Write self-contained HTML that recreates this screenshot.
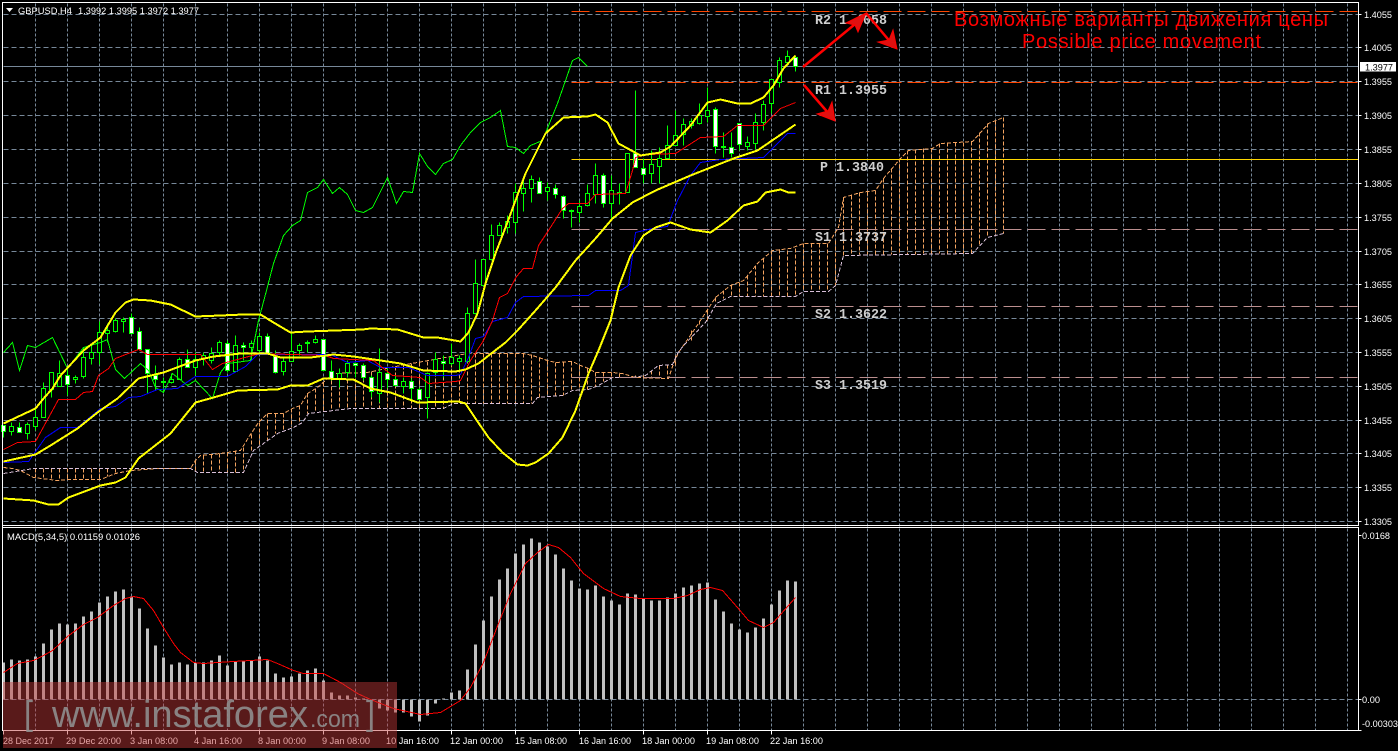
<!DOCTYPE html>
<html lang="en">
<head>
<meta charset="utf-8">
<title>GBPUSD,H4</title>
<style>
html,body{margin:0;padding:0;background:#000;width:1398px;height:751px;overflow:hidden}
svg{display:block}
.lab{font:9.5px "Liberation Sans",sans-serif;fill:#fff}
.piv{font:bold 14px "Liberation Mono",monospace;fill:#cfcfcf}
.ru{font:20px "Liberation Sans",sans-serif;fill:#f00}
</style>
</head>
<body>
<svg xmlns="http://www.w3.org/2000/svg" width="1398" height="751" viewBox="0 0 1398 751">
<rect width="1398" height="751" fill="#000"/>
<g transform="translate(.5 .5)" fill="none" shape-rendering="crispEdges">
<!-- grid -->
<path stroke="#778899" stroke-dasharray="3 2" d="M35 3V730M67 3V730M99 3V730M131 3V730M163 3V730M195 3V730M227 3V730M259 3V730M291 3V730M323 3V730M355 3V730M387 3V730M419 3V730M451 3V730M483 3V730M515 3V730M547 3V730M579 3V730M611 3V730M643 3V730M675 3V730M707 3V730M739 3V730M771 3V730M803 3V730M835 3V730M867 3V730M899 3V730M931 3V730M963 3V730M995 3V730M1027 3V730M1059 3V730M1091 3V730M1123 3V730M1155 3V730M1187 3V730M1219 3V730M1251 3V730M1283 3V730M1315 3V730M1347 3V730"/>
<path stroke="#778899" stroke-dasharray="5 3" d="M3 14H1358M3 47H1358M3 81H1358M3 115H1358M3 149H1358M3 183H1358M3 217H1358M3 251H1358M3 284H1358M3 318H1358M3 352H1358M3 386H1358M3 420H1358M3 453H1358M3 487H1358M3 521H1358M3 699H1358"/>
<!-- cloud -->
<path stroke="#f4a460" stroke-dasharray="4 2" d="M35 468V477M43 468V477M51 468V478M59 468V480M67 468V479M75 468V479M83 468V479M91 468V479M99 468V479M107 468V476M115 468V473M195 460V472M203 455V472M211 454V472M219 453V472M227 452V472M235 450V472M243 447V472M251 434V452M259 422V445M267 413V440M275 413V433M283 413V430M291 408V427M299 405V422M307 393V413M315 388V412M323 382V411M331 374V410M339 373V409M347 373V408M355 372V408M363 372V408M371 371V408M379 369V408M387 367V408M395 366V408M403 365V408M411 363V408M419 362V408M427 361V408M435 360V408M443 358V408M451 357V404M459 356V403M467 353V403M475 353V403M483 353V403M491 353V403M499 353V403M507 353V403M515 353V403M523 353V403M531 354V403M539 357V397M547 360V396M555 362V395M563 362V395M571 361V390M579 365V390M587 368V389M595 372V386M603 372V381M611 372V377M619 373V377M635 375V377M643 375V378M651 370V378M659 365V378M667 364V378M675 355V365M691 330V340M699 320V325M707 310V320M715 297V303M723 290V298M731 285V296M739 282V296M747 275V296M755 265V296M763 258V296M771 250V296M779 249V296M787 250V296M795 248V296M803 243V291M811 243V291M819 243V291M827 243V291M835 240V285M843 197V255M851 195V255M859 192V254M867 191V254M875 190V254M883 178V254M891 168V254M899 158V254M907 150V254M915 149V254M923 148V253M931 148V253M939 143V253M947 142V253M955 142V253M963 142V253M971 141V253M979 132V245M987 123V237M995 120V235M1003 117V233"/>
<polyline stroke="#f4a460" stroke-dasharray="4 2" points="3,467 12,468 20,470 33,477 57,480 67,479 100,479 115,473 130,470 157,468 190,468 195,460 200,455 220,453 240,450 248,437 258,422 267,413 283,413 292,408 300,405 307,393 317,387 333,373 367,372 400,365 467,353"/>
<polyline stroke="#f4a460" stroke-dasharray="4 2" points="467,353 523,353 532,355 547,360 555,362 572,361 580,365 588,368 595,372 612,372 622,373 635,377 668,378 673,363 678,352 683,345 700,320 715,297 730,285 743,280 757,263 772,250 790,248 803,243 828,243 838,227 843,197 860,192 875,190 883,178 900,158 908,150 932,148 940,143 972,141 988,123 1003,117"/>
<polyline stroke="#d8bfd8" stroke-dasharray="4 2" points="3,473 33,468 190,468 197,472 243,472 253,450 263,443 277,433 293,427 302,422 308,413 333,410 350,408 443,408 453,403 467,403 532,403 537,397 562,395 572,390 588,389 598,385 612,377 632,377 645,375 658,365 672,364 677,353 683,345 705,322 716,303 730,296 795,296 803,291 828,291 835,285 843,255 908,254 972,253 987,237 1003,233"/>
<!-- price + pivots -->
<path stroke="#778899" d="M3 66H1358"/>
<path stroke="#ff4500" stroke-dasharray="18 6" d="M571 11H1358M571 82H1358"/>
<path stroke="#ffd700" d="M571 159H1358"/>
<path stroke="#bc8f8f" stroke-dasharray="18 6" d="M571 229H1358M571 306H1358M571 377H1358"/>
<!-- wicks -->
<path stroke="#0f0" d="M3 425V437M11 422V435M19 422V432M27 422V439M35 408V430M43 382V417M51 372V397M59 360V386M67 368V395M75 375V383M83 347V378M91 345V364M99 321V364M107 323V342M115 318V332M123 317V332M131 313V334M139 327V349M147 349V393M155 365V390M163 377V392M171 373V383M179 357V379M187 349V367M195 352V375M203 352V365M211 347V363M219 340V355M227 340V372M235 335V372M243 342V360M251 340V360M259 332V352M267 333V353M275 350V373M283 358V375M291 332V361M299 343V355M307 340V352M315 335V343M323 339V371M331 360V380M339 368V387M347 360V377M355 362V377M363 363V380M371 375V397M379 348V402M387 367V388M395 375V386M403 377V393M411 378V400M419 387V400M427 372V418M435 352V375M443 355V377M451 343V365M459 355V370M467 307V362M475 259V314M483 259V285M491 224V260M499 222V235M507 215V233M515 183V233M523 178V211M531 175V202M539 177V193M547 182V200M555 184V198M563 195V218M571 209V227M579 200V222M587 184V206M595 163V203M603 173V207M611 175V218M619 183V204M627 153V192M635 90V167M643 158V183M651 150V183M659 147V183M667 125V158M675 110V145M683 118V145M691 118V128M699 103V124M707 87V122M715 107V153M723 132V157M731 132V157M739 123V150M747 136V150M755 113V149M763 100V130M771 79V113M779 57V87M787 50V63M795 55V71"/>
<!-- bull bodies -->
<path stroke="#0f0" fill="#000" d="M9 426h4v5h-4zM25 424h4v9h-4zM33 417h4v9h-4zM41 388h4v29h-4zM49 372h4v17h-4zM57 373h4v13h-4zM73 377h4v2h-4zM81 357h4v19h-4zM89 352h4v6h-4zM97 332h4v20h-4zM105 330h4v3h-4zM113 320h4v11h-4zM121 319h4v2h-4zM169 379h4v3h-4zM177 359h4v20h-4zM193 359h4v8h-4zM201 355h4v3h-4zM209 353h4v7h-4zM217 342h4v10h-4zM233 345h4v26h-4zM249 343h4v4h-4zM257 336h4v14h-4zM281 361h4v10h-4zM289 351h4v10h-4zM297 345h4v5h-4zM313 339h4v3h-4zM337 373h4v6h-4zM345 363h4v9h-4zM377 372h4v21h-4zM401 381h4v5h-4zM425 373h4v24h-4zM433 359h4v13h-4zM449 357h4v6h-4zM457 358h4v3h-4zM465 313h4v48h-4zM473 283h4v30h-4zM481 259h4v26h-4zM489 235h4v24h-4zM497 225h4v10h-4zM505 221h4v6h-4zM513 192h4v30h-4zM521 188h4v5h-4zM529 179h4v9h-4zM545 187h4v4h-4zM569 210h4v1h-4zM577 206h4v6h-4zM585 193h4v12h-4zM593 175h4v19h-4zM609 190h4v13h-4zM617 192h4v1h-4zM625 153h4v39h-4zM649 164h4v9h-4zM657 158h4v8h-4zM665 145h4v13h-4zM673 135h4v10h-4zM681 124h4v10h-4zM689 121h4v4h-4zM697 115h4v8h-4zM705 110h4v6h-4zM721 146h4v1h-4zM745 142h4v4h-4zM753 122h4v21h-4zM761 104h4v18h-4zM769 79h4v24h-4zM777 60h4v22h-4zM785 56h4v6h-4z"/>
<!-- bear bodies -->
<path stroke="#0f0" fill="#fff" d="M1 425h4v6h-4zM17 427h4v5h-4zM65 375h4v9h-4zM129 317h4v16h-4zM137 331h4v18h-4zM145 349h4v24h-4zM153 375h4v4h-4zM161 381h4v1h-4zM185 359h4v8h-4zM225 343h4v27h-4zM241 345h4v2h-4zM265 336h4v17h-4zM273 356h4v16h-4zM305 342h4v1h-4zM321 339h4v31h-4zM329 371h4v7h-4zM353 363h4v2h-4zM361 365h4v12h-4zM369 377h4v14h-4zM385 373h4v6h-4zM393 379h4v6h-4zM409 381h4v7h-4zM417 389h4v10h-4zM441 361h4v2h-4zM537 181h4v12h-4zM553 188h4v6h-4zM561 196h4v14h-4zM601 175h4v28h-4zM633 153h4v14h-4zM641 168h4v6h-4zM713 109h4v37h-4zM729 147h4v6h-4zM737 123h4v21h-4zM793 57h4v9h-4z"/>
<!-- green chikou -->
<polyline stroke="#0f0" points="3,352 12,342 19,370 27,345 35,347 52,337 67,368 83,347 100,342 107,339 115,369 124,378 140,363 148,370 155,387 163,392 172,373 187,385 195,380 212,398 220,372 227,363 250,360 258,320 266,290 273,263 283,235 292,225 300,220 307,192 317,187 323,179 332,193 339,187 347,194 355,210 363,212 372,207 387,177 396,203 403,191 412,192 419,153 427,166 435,174 443,163 452,159 460,145 470,132 480,122 490,117 500,110 507,146 515,147 523,153 530,145 542,140 557,103 572,60 578,57 587,66"/>
<!-- blue -->
<polyline stroke="#00f" points="3,462 28,461 45,437 60,427 77,427 100,408 115,406 128,397 140,396 157,389 177,388 195,376 227,376 245,366 257,354 330,354 347,362 367,360 380,367 408,367 427,375 455,375 460,374 468,357 475,338 483,336 492,321 507,317 515,302 523,296 588,295 595,290 620,290 628,285 635,232 652,228 667,226 677,200 690,175 700,162 720,159 763,157 787,133 795,133"/>
<!-- red -->
<polyline stroke="#f00" points="3,449 17,442 35,441 58,399 75,399 83,392 92,391 98,375 108,368 115,358 138,349 147,354 200,354 212,369 222,363 252,355 260,353 325,355 333,358 373,360 392,375 420,377 428,383 455,381 460,380 470,360 483,340 492,320 499,297 507,293 516,276 523,268 532,268 538,245 548,230 562,208 568,203 587,203 595,194 625,193 632,170 635,157 647,154 675,153 700,137 723,136 737,125 763,125 780,108 795,102"/>
<!-- bollinger -->
<g stroke="#ff0" stroke-width="2" stroke-linejoin="round">
<polyline points="3,423 35,408 43,398 52,388 60,375 83,350 100,337 115,312 125,302 133,299 150,300 170,304 195,316 220,315 243,314 260,314 273,322 290,332 307,331 362,329 370,328 397,329 423,337 437,337 460,341 468,332 477,313 485,283 495,253 505,227 515,200 525,173 545,133 563,117 587,116 595,114 607,122 618,143 640,155 660,152 670,146 690,125 707,102 720,99 737,103 750,103 763,97 773,85 783,68 795,55"/>
<polyline points="3,461 35,454 50,445 77,428 97,412 117,398 138,378 163,372 195,360 213,356 240,353 267,353 280,357 310,357 333,354 353,356 380,360 400,363 423,370 455,371 465,369 478,363 492,352 505,342 517,330 535,310 555,287 575,260 595,238 612,218 632,202 655,190 690,175 733,158 757,150 795,124"/>
<polyline points="3,498 33,500 48,504 58,504 68,497 100,485 115,482 125,477 138,458 170,433 195,402 213,397 237,390 277,389 290,385 307,385 323,378 353,379 370,388 390,392 417,402 458,401 465,403 475,418 488,437 502,452 517,464 527,465 535,462 548,453 562,437 575,410 588,373 598,350 610,320 618,287 630,255 643,235 655,227 670,222 690,229 710,232 727,220 743,205 757,201 765,192 780,189 788,192 795,192"/>
</g>
<!-- MACD bars -->
<path stroke="#c0c0c0" stroke-width="3" d="M3 699V662M11 699V659M19 699V660M27 699V659M35 699V656M43 699V643M51 699V629M59 699V623M67 699V624M75 699V623M83 699V616M91 699V611M99 699V602M107 699V596M115 699V591M123 699V589M131 699V596M139 699V608M147 699V628M155 699V645M163 699V657M171 699V664M179 699V662M187 699V664M195 699V662M203 699V662M211 699V660M219 699V655M227 699V665M235 699V661M243 699V660M251 699V660M259 699V656M267 699V660M275 699V673M283 699V677M291 699V676M299 699V673M307 699V670M315 699V668M323 699V680M331 699V692M339 699V695M347 699V695M355 699V697M363 699V698M371 699V700M379 699V708M387 699V710M395 699V712M403 699V712M411 699V716M419 699V721M427 699V715M435 699V703M443 699V698M451 699V692M459 699V690M467 699V669M475 699V644M483 699V620M491 699V596M499 699V579M507 699V568M515 699V553M523 699V544M531 699V538M539 699V542M547 699V546M555 699V554M563 699V568M571 699V580M579 699V588M587 699V589M595 699V585M603 699V596M611 699V600M619 699V604M627 699V593M635 699V594M643 699V598M651 699V600M659 699V600M667 699V597M675 699V593M683 699V587M691 699V585M699 699V583M707 699V582M715 699V599M723 699V611M731 699V623M739 699V629M747 699V632M755 699V627M763 699V618M771 699V604M779 699V590M787 699V580M795 699V581"/>
<!-- MACD signal -->
<polyline stroke="#f00" points="3,672 17,663 33,660 43,655 52,650 67,636 83,624 97,617 113,605 125,598 133,596 143,598 153,610 163,627 173,643 180,652 193,662 203,663 217,662 233,661 267,659 277,663 293,670 303,673 323,673 340,682 357,693 370,699 393,708 420,714 440,712 460,700 470,687 483,662 498,623 510,593 525,563 537,552 548,544 558,547 570,557 583,573 603,588 620,596 640,598 673,598 687,595 700,589 710,587 722,590 737,607 748,620 763,627 773,622 795,597"/>
<!-- frame -->
<path stroke="#fff" d="M2 2H1358V525H2zM2 527H1358V730H2zM2 2V730"/>
<!-- right ticks -->
<path stroke="#fff" d="M1358 14h3M1358 47h3M1358 81h3M1358 115h3M1358 149h3M1358 183h3M1358 217h3M1358 251h3M1358 284h3M1358 318h3M1358 352h3M1358 386h3M1358 420h3M1358 453h3M1358 487h3M1358 521h3M1358 535h3M1358 699h3M1358 730h3"/>
<!-- bottom ticks -->
<path stroke="#fff" d="M3 730v4M67 730v4M131 730v4M195 730v4M259 730v4M323 730v4M387 730v4M451 730v4M515 730v4M579 730v4M643 730v4M707 730v4M771 730v4"/>
</g>

<!-- header -->
<polygon points="6,8 13,8 9.5,12" fill="#fff"/>
<text class="lab" x="18" y="14" textLength="54" lengthAdjust="spacingAndGlyphs">GBPUSD,H4</text>
<text class="lab" x="78" y="14" textLength="121" lengthAdjust="spacingAndGlyphs">1.3992 1.3995 1.3972 1.3977</text>
<text class="lab" x="7" y="540" textLength="133" lengthAdjust="spacingAndGlyphs">MACD(5,34,5) 0.01159 0.01026</text>

<!-- price labels -->
<g class="lab">
<text x="1364" y="18" textLength="28" lengthAdjust="spacingAndGlyphs">1.4055</text>
<text x="1364" y="51" textLength="28" lengthAdjust="spacingAndGlyphs">1.4005</text>
<text x="1364" y="85" textLength="28" lengthAdjust="spacingAndGlyphs">1.3955</text>
<text x="1364" y="119" textLength="28" lengthAdjust="spacingAndGlyphs">1.3905</text>
<text x="1364" y="153" textLength="28" lengthAdjust="spacingAndGlyphs">1.3855</text>
<text x="1364" y="187" textLength="28" lengthAdjust="spacingAndGlyphs">1.3805</text>
<text x="1364" y="221" textLength="28" lengthAdjust="spacingAndGlyphs">1.3755</text>
<text x="1364" y="255" textLength="28" lengthAdjust="spacingAndGlyphs">1.3705</text>
<text x="1364" y="288" textLength="28" lengthAdjust="spacingAndGlyphs">1.3655</text>
<text x="1364" y="322" textLength="28" lengthAdjust="spacingAndGlyphs">1.3605</text>
<text x="1364" y="356" textLength="28" lengthAdjust="spacingAndGlyphs">1.3555</text>
<text x="1364" y="390" textLength="28" lengthAdjust="spacingAndGlyphs">1.3505</text>
<text x="1364" y="424" textLength="28" lengthAdjust="spacingAndGlyphs">1.3455</text>
<text x="1364" y="457" textLength="28" lengthAdjust="spacingAndGlyphs">1.3405</text>
<text x="1364" y="491" textLength="28" lengthAdjust="spacingAndGlyphs">1.3355</text>
<text x="1364" y="525" textLength="28" lengthAdjust="spacingAndGlyphs">1.3305</text>
<text x="1362" y="539" textLength="28" lengthAdjust="spacingAndGlyphs">0.0168</text>
<text x="1362" y="703" textLength="18" lengthAdjust="spacingAndGlyphs">0.00</text>
<text x="1362" y="727" textLength="36" lengthAdjust="spacingAndGlyphs">-0.00303</text>
</g>
<rect x="1360" y="62" width="36" height="9.5" fill="#fff"/>
<text x="1365" y="70.5" textLength="28" lengthAdjust="spacingAndGlyphs" style="font:9.5px 'Liberation Sans',sans-serif;fill:#000">1.3977</text>

<!-- time labels -->
<g class="lab">
<text x="3" y="744" textLength="51" lengthAdjust="spacingAndGlyphs">28 Dec 2017</text>
<text x="66" y="744" textLength="55" lengthAdjust="spacingAndGlyphs">29 Dec 20:00</text>
<text x="130" y="744" textLength="48" lengthAdjust="spacingAndGlyphs">3 Jan 08:00</text>
<text x="194" y="744" textLength="48" lengthAdjust="spacingAndGlyphs">4 Jan 16:00</text>
<text x="258" y="744" textLength="48" lengthAdjust="spacingAndGlyphs">8 Jan 00:00</text>
<text x="322" y="744" textLength="48" lengthAdjust="spacingAndGlyphs">9 Jan 08:00</text>
<text x="386" y="744" textLength="53" lengthAdjust="spacingAndGlyphs">10 Jan 16:00</text>
<text x="450" y="744" textLength="53" lengthAdjust="spacingAndGlyphs">12 Jan 00:00</text>
<text x="515" y="744" textLength="52" lengthAdjust="spacingAndGlyphs">15 Jan 08:00</text>
<text x="579" y="744" textLength="52" lengthAdjust="spacingAndGlyphs">16 Jan 16:00</text>
<text x="642" y="744" textLength="53" lengthAdjust="spacingAndGlyphs">18 Jan 00:00</text>
<text x="706" y="744" textLength="53" lengthAdjust="spacingAndGlyphs">19 Jan 08:00</text>
<text x="770" y="744" textLength="53" lengthAdjust="spacingAndGlyphs">22 Jan 16:00</text>
</g>

<!-- pivot labels -->
<g class="piv">
<text x="815" y="24" textLength="72" lengthAdjust="spacingAndGlyphs">R2 1.4058</text>
<text x="815" y="94" textLength="72" lengthAdjust="spacingAndGlyphs">R1 1.3955</text>
<text x="820" y="171" textLength="64" lengthAdjust="spacingAndGlyphs">P 1.3840</text>
<text x="815" y="241" textLength="72" lengthAdjust="spacingAndGlyphs">S1 1.3737</text>
<text x="815" y="318" textLength="72" lengthAdjust="spacingAndGlyphs">S2 1.3622</text>
<text x="815" y="389" textLength="72" lengthAdjust="spacingAndGlyphs">S3 1.3519</text>
</g>

<!-- russian / english -->
<text class="ru" x="954" y="26" textLength="374" lengthAdjust="spacing">Возможные варианты движения цены</text>
<text class="ru" x="1022" y="48" textLength="239" lengthAdjust="spacing">Possible price movement</text>

<!-- arrows -->
<g fill="#f00" stroke="#f00" stroke-width="1">
<path d="M803 67L860 20" stroke-width="2.5" fill="none"/>
<polygon fill="#e01010" points="866,13 858,32 855,25 846,23"/>
<path d="M866 13L892 44" stroke-width="2.5" fill="none"/>
<polygon fill="#e01010" points="897,49 893,30 889,40 878,42"/>
<path d="M804 85L830 115" stroke-width="2.5" fill="none"/>
<polygon fill="#e01010" points="835,121 832,102 828,111 817,114"/>
</g>

<!-- watermark -->
<rect x="3" y="682" width="394" height="66" fill="#c33838" fill-opacity=".46"/>
<g fill="#8e8e8e" fill-opacity=".9" style="font-family:'Liberation Sans',sans-serif">
<text x="52" y="727" font-size="38" textLength="256" lengthAdjust="spacingAndGlyphs">www.instaforex</text>
<text x="310" y="727" font-size="24" textLength="50" lengthAdjust="spacingAndGlyphs">.com</text>
<text x="24" y="725" font-size="34" textLength="9" lengthAdjust="spacingAndGlyphs">[</text>
<text x="366" y="725" font-size="34" textLength="9" lengthAdjust="spacingAndGlyphs">]</text>
</g>
</svg>
</body>
</html>
